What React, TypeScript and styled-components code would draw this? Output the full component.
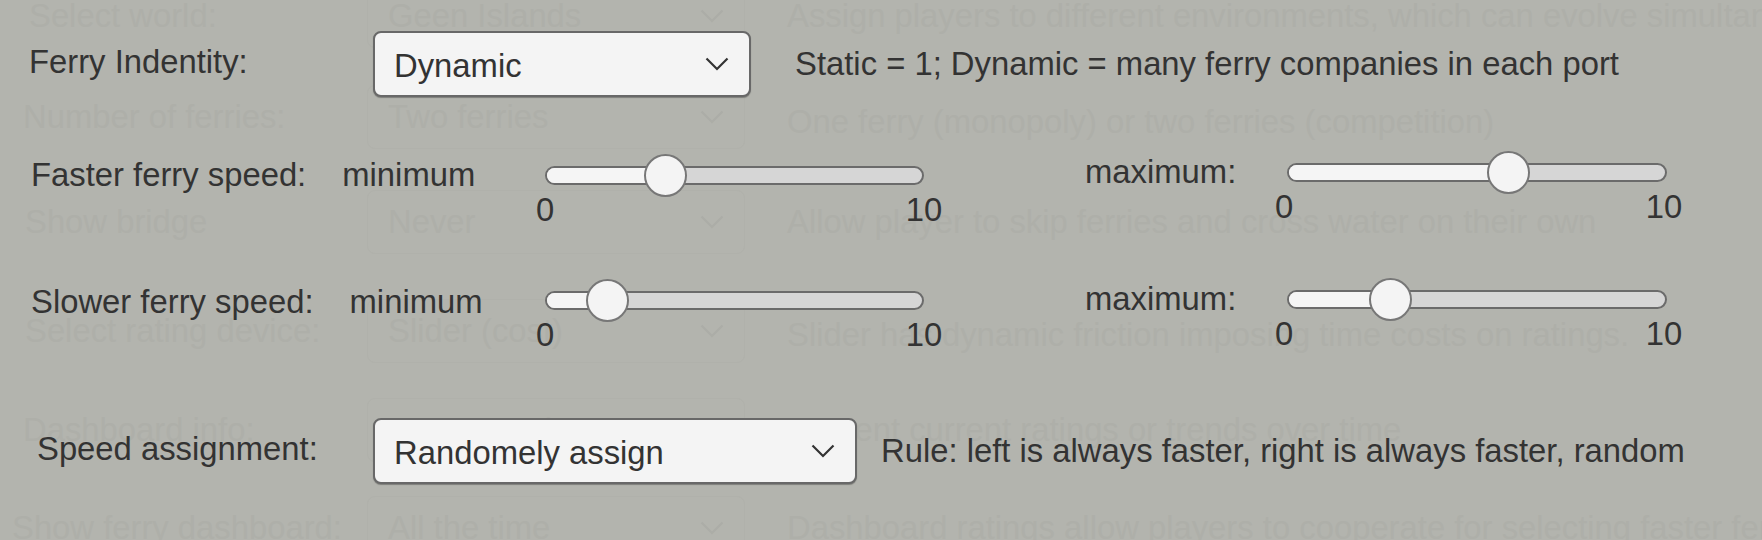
import React from "react";
import styled, { createGlobalStyle } from "styled-components";

const GlobalStyle = createGlobalStyle`
  html, body { margin: 0; padding: 0; background: #b3b4ae; }
  body { font-family: "Liberation Sans", Arial, sans-serif; }
`;

const Page = styled.div`
  position: relative;
  width: 1762px;
  height: 540px;
  overflow: hidden;
  background: #b3b4ae;
  font-size: 32.8px;
`;

/* ---------- dimmed form behind the overlay ---------- */
const BgForm = styled.div`
  display: flex;
  flex-direction: column;
  margin-top: -34px;
  color: #aeafa9;
`;

const BgRow = styled.div<{ $h: number }>`
  display: grid;
  grid-template-columns: 367px 378px 1fr;
  align-items: center;
  height: ${(p) => p.$h}px;
`;

const BgLabel = styled.div<{ $indent: number }>`
  padding-left: ${(p) => p.$indent}px;
  white-space: nowrap;
`;

const BgSelect = styled.div`
  box-sizing: border-box;
  height: 64px;
  border: 1.5px solid #b0b1ab;
  border-radius: 8px;
  display: flex;
  align-items: center;
  justify-content: space-between;
  padding: 0 20px;
  white-space: nowrap;
`;

const BgDesc = styled.div<{ $drop: number }>`
  padding-left: 42px;
  margin-top: ${(p) => p.$drop * 2}px;
  white-space: nowrap;
`;

/* ---------- overlay dialog content ---------- */
const Overlay = styled.div`
  position: absolute;
  inset: 0;
  display: flex;
  flex-direction: column;
  color: #333333;
`;

const SelectRow = styled.div<{ $top: number }>`
  display: flex;
  align-items: center;
  height: 66px;
  margin-top: ${(p) => p.$top}px;
`;

const RowLabel = styled.div<{ $indent: number }>`
  box-sizing: border-box;
  flex: 0 0 373px;
  padding-left: ${(p) => p.$indent}px;
  margin-bottom: 4px;
  white-space: nowrap;
`;

const Select = styled.div<{ $w: number }>`
  box-sizing: border-box;
  width: ${(p) => p.$w}px;
  height: 66px;
  display: flex;
  align-items: center;
  justify-content: space-between;
  padding: 0 20px 0 19px;
  background: #f4f4f4;
  border: 2px solid #686868;
  border-radius: 8px;
  box-shadow: 0 1px 1px rgba(0, 0, 0, 0.3);
  white-space: nowrap;
`;

const SelectValue = styled.span`
  padding-top: 4px;
`;

const Hint = styled.div<{ $gap: number }>`
  margin-left: ${(p) => p.$gap}px;
  white-space: nowrap;
`;

const SliderRow = styled.div<{ $top: number }>`
  display: flex;
  align-items: flex-start;
  margin-top: ${(p) => p.$top}px;
`;

const SliderLead = styled.div<{ $drop: number }>`
  box-sizing: border-box;
  flex: 0 0 545px;
  height: 43px;
  display: flex;
  align-items: center;
  gap: 36px;
  padding-left: 31px;
  padding-top: ${(p) => p.$drop * 2}px;
  white-space: nowrap;
`;

const SliderSide = styled.div<{ $shift: number }>`
  display: flex;
  align-items: flex-start;
  margin-left: 161px;
  margin-top: ${(p) => -p.$shift}px;
`;

const SideLabel = styled.div`
  flex: 0 0 202px;
  height: 43px;
  display: flex;
  align-items: center;
  white-space: nowrap;
`;

const SliderBox = styled.div<{ $w: number }>`
  width: ${(p) => p.$w}px;
  display: flex;
  flex-direction: column;
`;

const TrackArea = styled.div`
  position: relative;
  height: 43px;
  display: flex;
  align-items: center;
`;

const Track = styled.div`
  box-sizing: border-box;
  width: 100%;
  height: 19px;
  border: 2px solid #6b6b6b;
  border-radius: 10px;
  background: #d6d6d6;
  overflow: hidden;
`;

const TrackFill = styled.div`
  height: 100%;
  background: #f5f5f5;
`;

const Thumb = styled.div`
  position: absolute;
  top: 0;
  box-sizing: border-box;
  width: 43px;
  height: 43px;
  margin-left: -21.5px;
  border-radius: 50%;
  background: #f4f4f4;
  border: 2px solid #777777;
`;

const Ticks = styled.div<{ $nudge: number }>`
  display: flex;
  justify-content: space-between;
  height: 25px;
  line-height: 25px;
  margin-left: ${(p) => -p.$nudge}px;
  margin-right: ${(p) => p.$nudge}px;
`;

const Tick = styled.span`
  width: 0;
  display: flex;
  justify-content: center;
  white-space: nowrap;
`;

const Chevron = ({ color }: { color: string }) => (
  <svg width="24" height="14" viewBox="0 0 24 14" fill="none">
    <polyline points="1.5,1.5 12,12 22.5,1.5" stroke={color} strokeWidth="2.2" />
  </svg>
);

const Slider = ({ width, value, nudge = 0 }: { width: number; value: number; nudge?: number }) => {
  const center = 21.5 + (value / 10) * (width - 43);
  return (
    <SliderBox $w={width}>
      <TrackArea>
        <Track>
          <TrackFill style={{ width: center }} />
        </Track>
        <Thumb style={{ left: center }} />
      </TrackArea>
      <Ticks $nudge={nudge}>
        <Tick>0</Tick>
        <Tick>10</Tick>
      </Ticks>
    </SliderBox>
  );
};

const bgRows = [
  { h: 100, indent: 29, drop: 0, label: "Select world:", value: "Geen Islands", desc: "Assign players to different environments, which can evolve simultaneously" },
  { h: 102, indent: 23, drop: 5, label: "Number of ferries:", value: "Two ferries", desc: "One ferry (monopoly) or two ferries (competition)" },
  { h: 108, indent: 25, drop: 0, label: "Show bridge", value: "Never", desc: "Allow player to skip ferries and cross water on their own" },
  { h: 110, indent: 25, drop: 4, label: "Select rating device:", value: "Slider (cost)", desc: "Slider has dynamic friction imposing time costs on ratings." },
  { h: 88, indent: 23, drop: 0, label: "Dashboard info:", value: "Current ratings", desc: "Present current ratings or trends over time" },
  { h: 108, indent: 12, drop: 0, label: "Show ferry dashboard:", value: "All the time", desc: "Dashboard ratings allow players to cooperate for selecting faster ferries" },
];

export default function App() {
  return (
    <Page>
      <GlobalStyle />
      <BgForm>
        {bgRows.map((r) => (
          <BgRow key={r.label} $h={r.h}>
            <BgLabel $indent={r.indent}>{r.label}</BgLabel>
            <BgSelect>
              <span>{r.value}</span>
              <Chevron color="#acada7" />
            </BgSelect>
            <BgDesc $drop={r.drop}>{r.desc}</BgDesc>
          </BgRow>
        ))}
      </BgForm>

      <Overlay>
        <SelectRow $top={31}>
          <RowLabel $indent={29}>Ferry Indentity:</RowLabel>
          <Select $w={378}>
            <SelectValue>Dynamic</SelectValue>
            <Chevron color="#333333" />
          </Select>
          <Hint $gap={44}>Static = 1; Dynamic = many ferry companies in each port</Hint>
        </SelectRow>

        <SliderRow $top={56.5}>
          <SliderLead $drop={0}>
            <span>Faster ferry speed:</span>
            <span>minimum</span>
          </SliderLead>
          <Slider width={379} value={2.96} />
          <SliderSide $shift={3}>
            <SideLabel>maximum:</SideLabel>
            <Slider width={380} value={5.92} nudge={3} />
          </SliderSide>
        </SliderRow>

        <SliderRow $top={57}>
          <SliderLead $drop={2}>
            <span>Slower ferry speed:</span>
            <span>minimum</span>
          </SliderLead>
          <Slider width={379} value={1.22} />
          <SliderSide $shift={1}>
            <SideLabel>maximum:</SideLabel>
            <Slider width={380} value={2.42} nudge={3} />
          </SliderSide>
        </SliderRow>

        <SelectRow $top={71.5}>
          <RowLabel $indent={37}>Speed assignment:</RowLabel>
          <Select $w={484}>
            <SelectValue>Randomely assign</SelectValue>
            <Chevron color="#333333" />
          </Select>
          <Hint $gap={24}>Rule: left is always faster, right is always faster, random</Hint>
        </SelectRow>
      </Overlay>
    </Page>
  );
}
